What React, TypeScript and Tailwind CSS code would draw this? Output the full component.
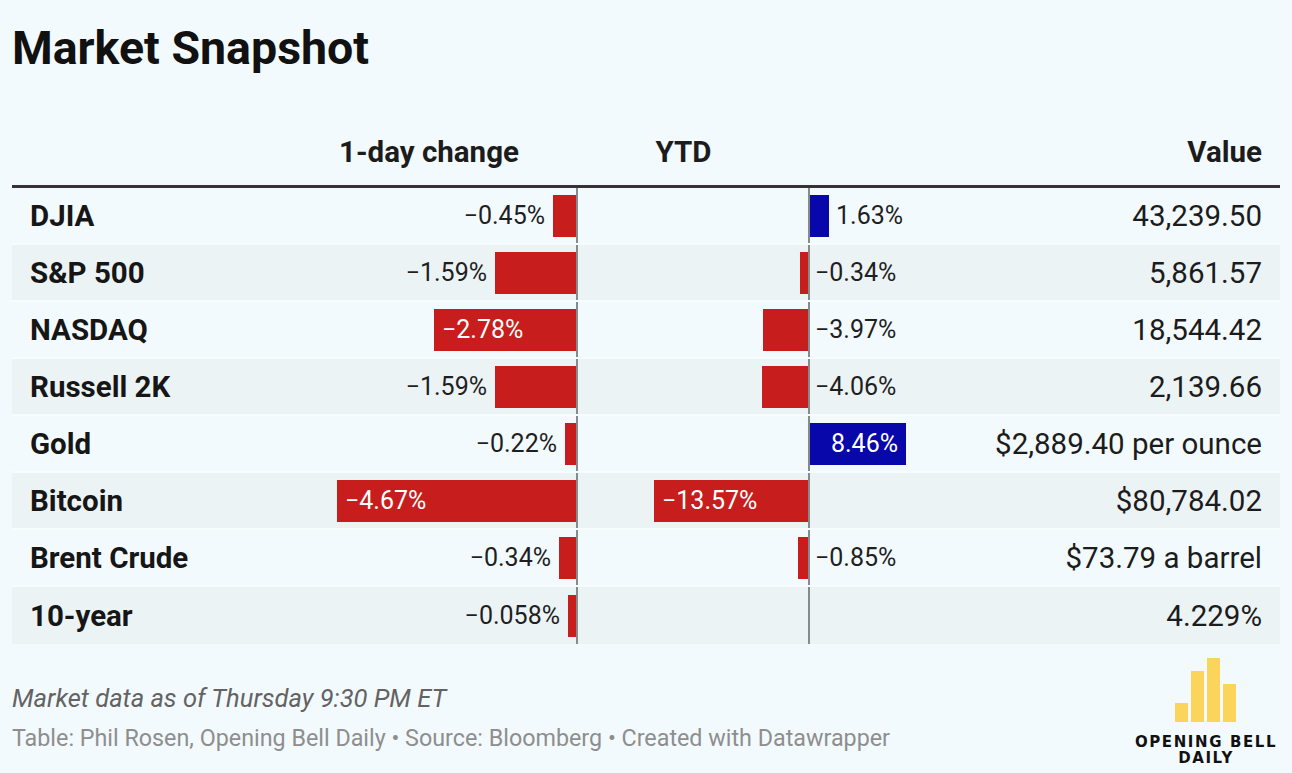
import React from "react";

type Row = {
  name: string;
  day: number;
  ytd: number | null;
  value: string;
};

const rows: Row[] = [
  { name: "DJIA", day: -0.45, ytd: 1.63, value: "43,239.50" },
  { name: "S&P 500", day: -1.59, ytd: -0.34, value: "5,861.57" },
  { name: "NASDAQ", day: -2.78, ytd: -3.97, value: "18,544.42" },
  { name: "Russell 2K", day: -1.59, ytd: -4.06, value: "2,139.66" },
  { name: "Gold", day: -0.22, ytd: 8.46, value: "$2,889.40 per ounce" },
  { name: "Bitcoin", day: -4.67, ytd: -13.57, value: "$80,784.02" },
  { name: "Brent Crude", day: -0.34, ytd: -0.85, value: "$73.79 a barrel" },
  { name: "10-year", day: -0.058, ytd: null, value: "4.229%" },
];

// px per percentage point
const DAY_SCALE = 51.2;
const YTD_SCALE = 11.35;

function fmt(v: number) {
  const s = Math.abs(v).toString();
  return (v < 0 ? "\u2212" : "") + s + "%";
}

function DayCell({ v }: { v: number }) {
  const w = Math.max(3, Math.round(Math.abs(v) * DAY_SCALE));
  const inside = w > 110;
  return (
    <div className="w-[298px] h-full flex items-center justify-end border-r-2 border-[#858b8d]">
      {!inside && <span className="mr-2 text-[25px] text-[#1f1f1f]">{fmt(v)}</span>}
      <div
        className="h-[42px] bg-[#c71e1d] flex items-center pl-2 text-[25px] text-white"
        style={{ width: w }}
      >
        {inside ? fmt(v) : null}
      </div>
    </div>
  );
}

function YtdCell({ v }: { v: number | null }) {
  if (v === null) {
    return (
      <>
        <div className="w-[232px] h-full border-r-2 border-[#858b8d]" />
        <div className="w-[180px] h-full" />
      </>
    );
  }
  const w = Math.round(Math.abs(v) * YTD_SCALE);
  const inside = w > 80;
  const neg = v < 0;
  return (
    <>
      <div className="w-[232px] h-full flex items-center justify-end border-r-2 border-[#858b8d]">
        {neg && (
          <div
            className="h-[42px] bg-[#c71e1d] flex items-center pl-2 text-[25px] text-white"
            style={{ width: w }}
          >
            {inside ? fmt(v) : null}
          </div>
        )}
      </div>
      <div className="w-[180px] h-full flex items-center">
        {!neg && (
          <div
            className="h-[42px] bg-[#0808aa] flex items-center justify-end pr-2 text-[25px] text-white"
            style={{ width: w }}
          >
            {inside ? fmt(v) : null}
          </div>
        )}
        {!inside && (
          <span className={`text-[25px] text-[#1f1f1f] ${neg ? "ml-[5px]" : "ml-[7px]"}`}>
            {fmt(v)}
          </span>
        )}
      </div>
    </>
  );
}

function Logo() {
  return (
    <div className="w-[142px] mr-[3px] pt-[14px] flex flex-col items-center">
      <svg width="62" height="64" viewBox="0 0 62 64">
        <rect x="0" y="45" width="13" height="19" fill="#fbd45c" />
        <rect x="16" y="13" width="13" height="51" fill="#fbd45c" />
        <rect x="32" y="0" width="13" height="64" fill="#fbd45c" />
        <rect x="48" y="26" width="13" height="38" fill="#fbd45c" />
      </svg>
      <div
        className="mt-[12px] text-center text-[15px] leading-[16px] font-bold tracking-[1.6px] text-[#111] whitespace-nowrap"
        style={{ fontFamily: '"DejaVu Sans", sans-serif' }}
      >
        <div>OPENING BELL</div>
        <div>DAILY</div>
      </div>
    </div>
  );
}

export default function App() {
  return (
    <div
      className="w-[1292px] h-[773px] bg-[#f3fafd] px-3 overflow-hidden text-[#1a1a1a]"
      style={{ fontFamily: 'Roboto, "Liberation Sans", sans-serif' }}
    >
      <h1 className="pt-[21px] text-[46.5px] leading-[54px] font-bold text-[#111]">Market Snapshot</h1>

      {/* column headers */}
      <div className="mt-[59px] flex h-[36px] text-[29.5px] leading-[36px] font-bold text-[#1c1c1c]">
        <div className="w-[268px]" />
        <div className="w-[298px] text-center">1-day change</div>
        <div className="w-[211px] text-center">YTD</div>
        <div className="flex-1 text-right pr-[18px]">Value</div>
      </div>
      <div className="mt-[15px] h-[3px] bg-[#333]" />

      {/* table rows */}
      <div>
        {rows.map((r, i) => (
          <div
            key={r.name}
            className={`flex h-[57px] items-center ${i % 2 === 1 ? "bg-[#ecf3f5]" : ""} ${
              i < rows.length - 1 ? "border-b-2 border-[#f8fcfd]" : ""
            }`}
          >
            <div className="w-[268px] pl-[18px] pt-[2px] text-[29.5px] font-bold text-[#161616]">{r.name}</div>
            <DayCell v={r.day} />
            <YtdCell v={r.ytd} />
            <div className="flex-1 text-right pr-[18px] pt-[2px] text-[29.5px] text-[#1c1c1c] whitespace-nowrap">
              {r.value}
            </div>
          </div>
        ))}
      </div>

      {/* footer */}
      <div className="flex justify-between">
        <div className="pt-[39px]">
          <div className="text-[25.5px] leading-[30px] italic text-[#636363]">
            Market data as of Thursday 9:30 PM ET
          </div>
          <div className="mt-[11px] text-[23.3px] leading-[28px] text-[#8e8e8e]">
            Table: Phil Rosen, Opening Bell Daily • Source: Bloomberg • Created with Datawrapper
          </div>
        </div>
        <Logo />
      </div>
    </div>
  );
}
